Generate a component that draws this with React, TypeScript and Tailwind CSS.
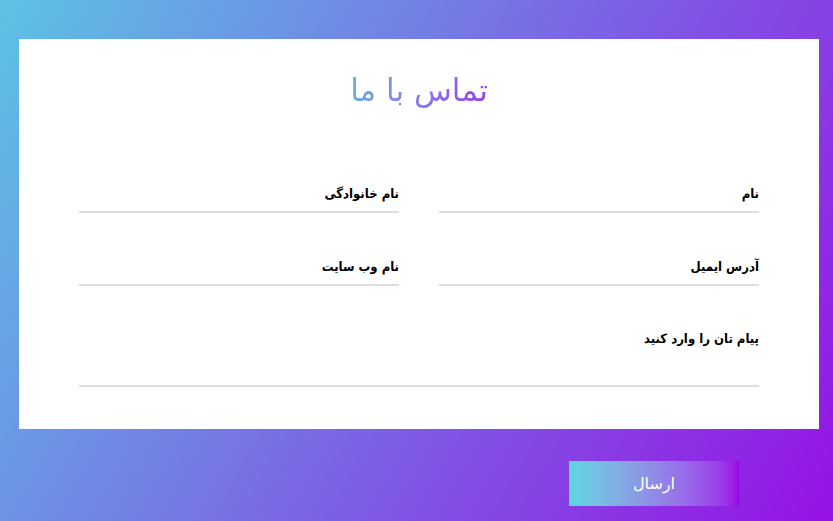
export default function App() {
  const font = { fontFamily: '"DejaVu Sans", "Noto Sans", sans-serif' };

  return (
    <div
      dir="rtl"
      className="w-[833px] h-[521px] overflow-hidden bg-[linear-gradient(120deg,#5dc2e4_0%,#9612e4_100%)]"
      style={font}
    >
      <div dir="ltr" className="pt-[39px] pl-[19px]">
        <div dir="rtl" className="w-[800px] h-[390px] bg-white px-[60px] flex flex-col">
          <div className="mt-[27px] h-[48px] flex justify-center">
            <h1 className="text-[31px] leading-[48px] font-normal bg-gradient-to-r from-[#64aae4] to-[#983ce8] bg-clip-text text-transparent">
              تماس با ما
            </h1>
          </div>

          <div className="mt-[70px] grid grid-cols-2 gap-x-[40px] gap-y-[44px]">
            <Field label="نام" />
            <Field label="نام خانوادگی" />
            <Field label="آدرس ایمیل" />
            <Field label="نام وب سایت" />
          </div>

          <div className="mt-[43px]">
            <label className="block h-[20px] text-[13px] leading-[20px] font-bold text-black font-['DejaVu_Sans_Condensed','DejaVu_Sans',sans-serif]">
              پیام تان را وارد کنید
            </label>
            <div className="h-[36px]" />
            <div className="h-[2px] bg-[#dddddd]" />
          </div>
        </div>

        <div className="w-[800px] mt-[32px] flex justify-end pr-[80px]">
          <button className="w-[170px] h-[45px] border-0 bg-gradient-to-r from-[#5bd8e0] to-[#9c00e8] text-white text-[16px]">
            ارسال
          </button>
        </div>
      </div>
    </div>
  );
}

function Field({ label }: { label: string }) {
  return (
    <div>
      <label className="block h-[20px] text-[13px] leading-[20px] font-bold text-black font-['DejaVu_Sans_Condensed','DejaVu_Sans',sans-serif]">
        {label}
      </label>
      <div className="h-[7px]" />
      <div className="h-[2px] bg-[#dddddd]" />
    </div>
  );
}
